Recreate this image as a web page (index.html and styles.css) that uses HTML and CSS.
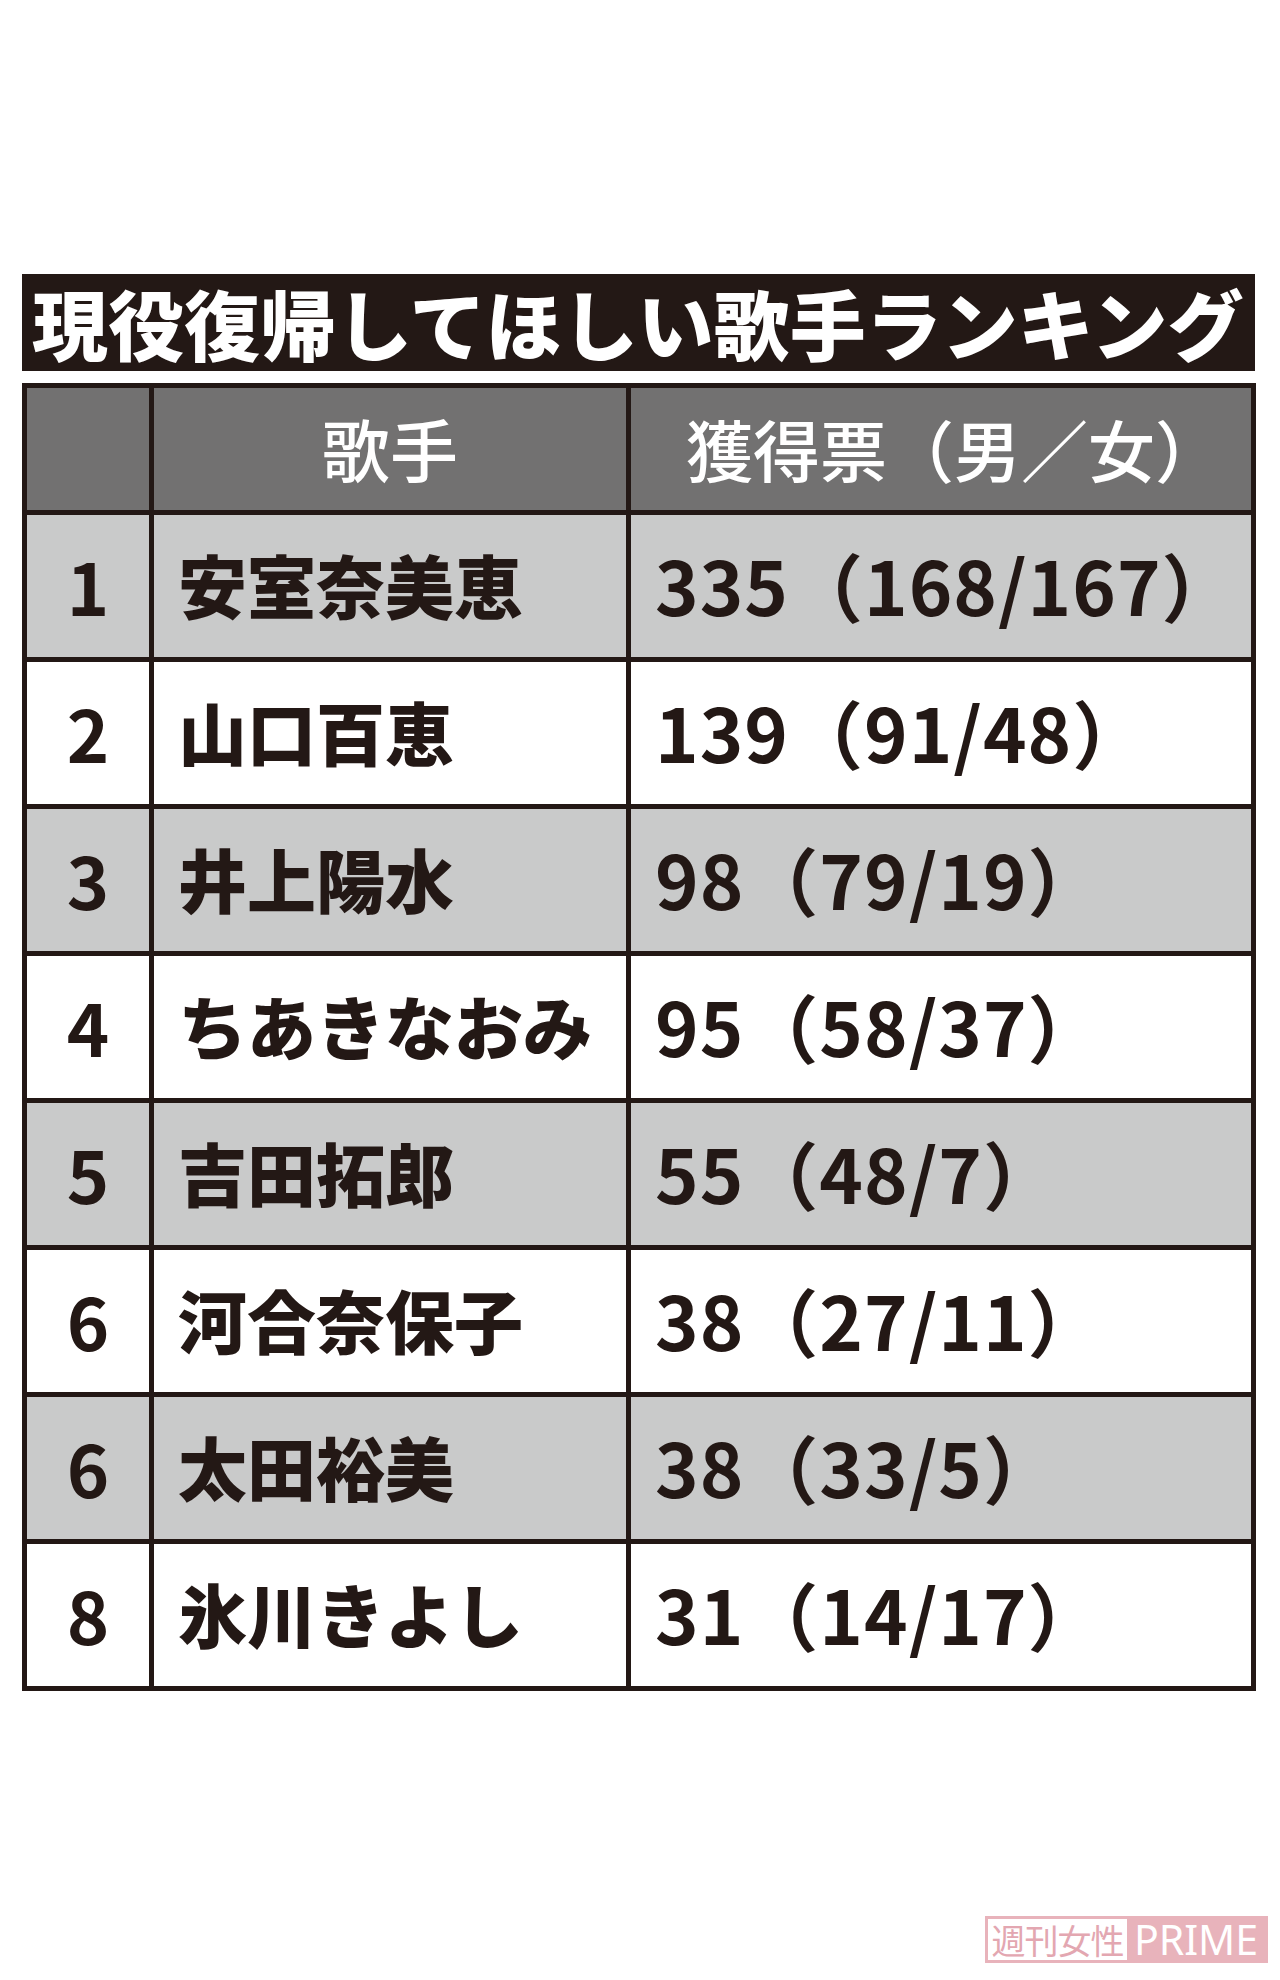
FILE: index.html
```html
<!DOCTYPE html>
<html lang="ja">
<head>
<meta charset="utf-8">
<title>現役復帰してほしい歌手ランキング</title>
<link rel="stylesheet" href="styles.css">
</head>
<body>
<div class="page">
  <div class="title">現役復帰してほしい歌手ランキング</div>
  <div class="table">
    <div class="cell head"></div>
    <div class="cell head">歌手</div>
    <div class="cell head votes-h">獲得票（男／女）</div>

    <div class="cell rank gray">1</div>
    <div class="cell name gray">安室奈美恵</div>
    <div class="cell votes gray">335（168/167）</div>

    <div class="cell rank">2</div>
    <div class="cell name">山口百恵</div>
    <div class="cell votes">139（91/48）</div>

    <div class="cell rank gray">3</div>
    <div class="cell name gray">井上陽水</div>
    <div class="cell votes gray">98（79/19）</div>

    <div class="cell rank">4</div>
    <div class="cell name">ちあきなおみ</div>
    <div class="cell votes">95（58/37）</div>

    <div class="cell rank gray">5</div>
    <div class="cell name gray">吉田拓郎</div>
    <div class="cell votes gray">55（48/7）</div>

    <div class="cell rank">6</div>
    <div class="cell name">河合奈保子</div>
    <div class="cell votes">38（27/11）</div>

    <div class="cell rank gray">6</div>
    <div class="cell name gray">太田裕美</div>
    <div class="cell votes gray">38（33/5）</div>

    <div class="cell rank">8</div>
    <div class="cell name">氷川きよし</div>
    <div class="cell votes">31（14/17）</div>
  </div>
  <div class="watermark"><span class="wm-jp">週刊女性</span><span class="wm-en">PRIME</span></div>
</div>
</body>
</html>
```

FILE: styles.css
```css
html, body {
  margin: 0;
  padding: 0;
  background: #ffffff;
}

.page {
  position: relative;
  width: 1280px;
  height: 1980px;
  padding: 274px 0 0 22px;
  box-sizing: border-box;
  font-family: "Noto Sans CJK JP", "Noto Sans", sans-serif;
  color: #231815;
}

.title {
  width: 1233px;
  height: 97px;
  box-sizing: border-box;
  background: #231815;
  color: #ffffff;
  font-size: 76px;
  font-weight: 900;
  line-height: 97px;
  padding-left: 10px;
  letter-spacing: 0;
  white-space: nowrap;
}

.table {
  margin-top: 12px;
  display: grid;
  grid-template-columns: 122px 472px 620px;
  grid-template-rows: 122px repeat(8, 142px);
  gap: 5px;
  padding: 5px;
  width: 1234px;
  box-sizing: border-box;
  background: #231815;
}

.cell {
  background: #ffffff;
  display: flex;
  align-items: center;
  white-space: nowrap;
}

.cell.gray {
  background: #c9caca;
}

.cell.head {
  background: #727171;
  color: #ffffff;
  justify-content: center;
  font-size: 68px;
  font-weight: 500;
  padding-bottom: 4px;
}

.cell.head.votes-h {
  font-size: 67px;
  padding-left: 26px;
}

.rank {
  justify-content: center;
  font-size: 72px;
  font-weight: 700;
  padding-bottom: 4px;
}

.name {
  padding-left: 24px;
  font-size: 69px;
  font-weight: 900;
  padding-bottom: 4px;
}

.votes {
  padding-left: 24px;
  font-size: 74px;
  font-weight: 700;
  letter-spacing: 1px;
  padding-bottom: 6px;
}

.watermark {
  position: absolute;
  left: 985px;
  top: 1916px;
  height: 47px;
  display: flex;
  border: 3px solid #e8b3bb;
  box-sizing: border-box;
}

.wm-jp {
  width: 139px;
  background: #ffffff;
  color: #e3a7b1;
  font-size: 34px;
  font-weight: 400;
  line-height: 41px;
  text-align: center;
  letter-spacing: -1px;
}

.wm-en {
  width: 138px;
  background: #e8b3bb;
  color: #ffffff;
  font-family: "Noto Sans", "Open Sans", sans-serif;
  font-size: 41px;
  font-weight: 400;
  line-height: 41px;
  text-align: center;
}
```
